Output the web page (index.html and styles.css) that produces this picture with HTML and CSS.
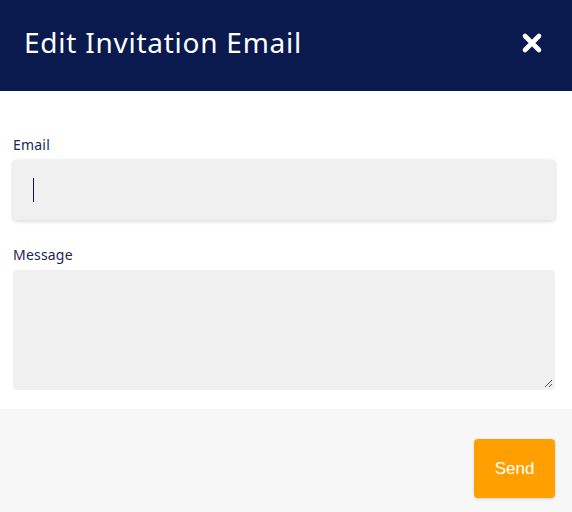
FILE: index.html
```html
<!DOCTYPE html>
<html>
<head>
<meta charset="utf-8">
<link rel="stylesheet" href="styles.css">
</head>
<body>
<div class="modal">
  <header class="modal-header">
    <h1 class="modal-title">Edit Invitation Email</h1>
    <button class="close-btn" aria-label="Close">
      <svg width="22" height="22" viewBox="0 0 22 22"><path d="M4 4 L18 18 M18 4 L4 18" stroke="#fff" stroke-width="4.6" stroke-linecap="round"/></svg>
    </button>
  </header>
  <section class="modal-body">
    <label class="field-label">Email</label>
    <div class="input"><span class="caret"></span></div>
    <label class="field-label second">Message</label>
    <div class="textarea">
      <svg class="grip" width="10" height="10" viewBox="0 0 10 10"><path d="M9 2 L2 9 M9 6 L6 9" stroke="#555" stroke-width="1"/></svg>
    </div>
  </section>
  <footer class="modal-footer">
    <button class="send-btn">Send</button>
  </footer>
</div>
</body>
</html>
```
FILE: styles.css
```css
* { box-sizing: border-box; }
html, body { margin: 0; padding: 0; }
body { width: 572px; height: 512px; background: #fff; font-family: "Noto Sans", "Open Sans", sans-serif; overflow: hidden; }
.modal { display: flex; flex-direction: column; height: 512px; }
.modal-header {
  height: 91px; background: #0a1a4e; display: flex; align-items: center;
  justify-content: space-between; padding: 0 29px 0 24px;
}
.modal-title { margin: 0; color: #fff; font-weight: 400; font-size: 28px; letter-spacing: 0.75px; padding-bottom: 8px; }
.close-btn { background: none; border: 0; padding: 0; display: flex; margin-bottom: 6px; }
.modal-body { padding: 45px 17px 19px 13px; display: flex; flex-direction: column; }
.field-label { color: #1b2559; font-size: 14px; letter-spacing: 0.2px; line-height: 18px; margin-bottom: 6px; }
.field-label.second { margin-top: 26px; margin-bottom: 6px; }
.input {
  height: 60px; background: #f0f0f0; border-radius: 4px;
  box-shadow: 0 1px 4px rgba(0,0,0,0.18); display: flex; align-items: center; padding-left: 20px;
}
.caret { width: 1px; height: 24px; background: #0a1a4e; }
.textarea { height: 120px; background: #f0f0f0; border-radius: 4px; position: relative; }
.grip { position: absolute; right: 2px; bottom: 2px; }
.modal-footer { flex: 1; background: #f7f7f7; display: flex; justify-content: flex-end; align-items: flex-start; padding: 30px 17px 0 0; }
.send-btn {
  width: 81px; height: 59px; background: #ffa000; color: #fff; border: 0; border-radius: 4px;
  font-family: "Liberation Sans", Arial, sans-serif; font-size: 17px; box-shadow: 0 1px 3px rgba(0,0,0,0.15);
}
```
